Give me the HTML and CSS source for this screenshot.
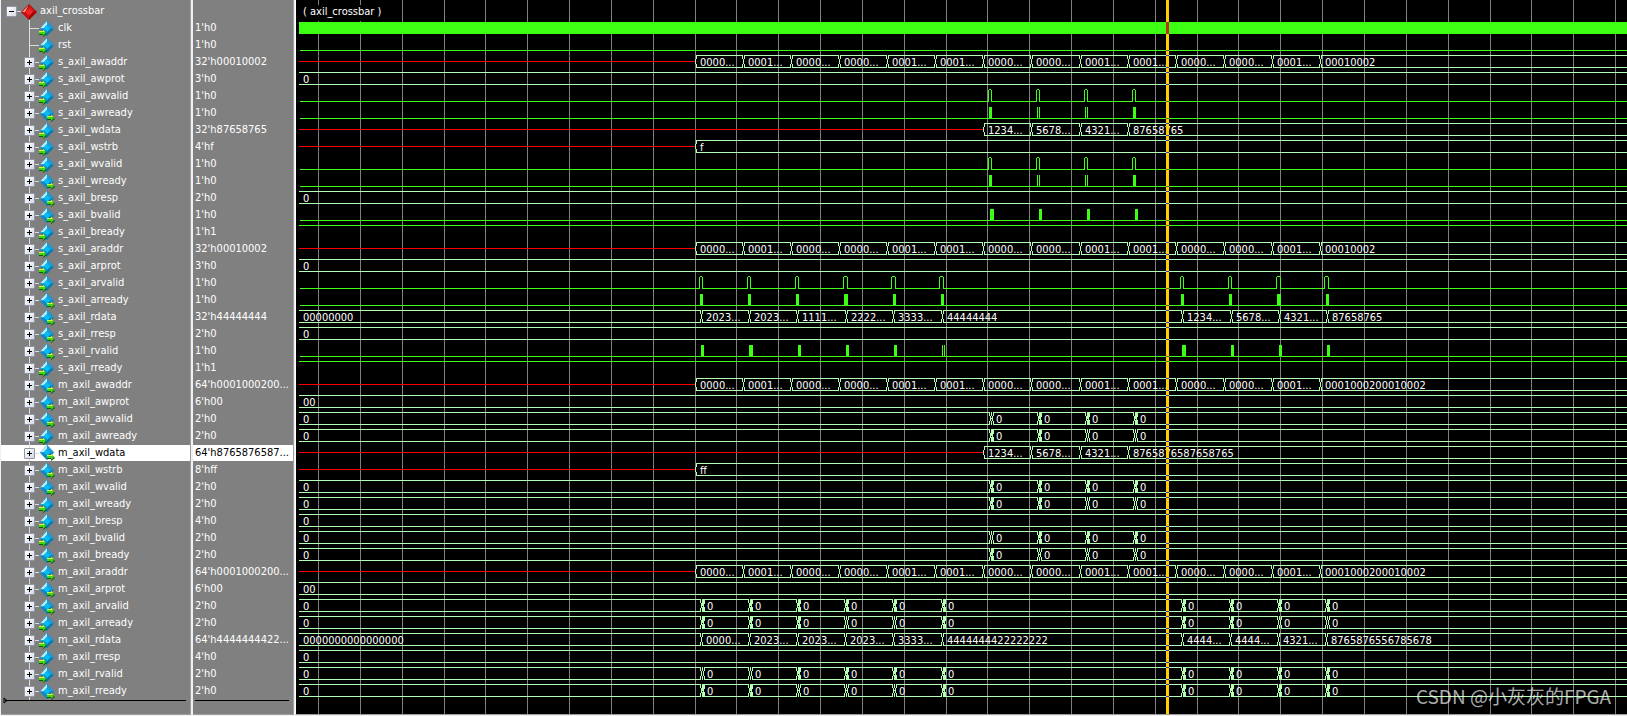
FILE: index.html
```
<!DOCTYPE html>
<html lang="en">
<head>
<meta charset="utf-8">
<title>axil_crossbar waveform</title>
<link rel="stylesheet" href="styles.css">
</head>
<body>
<svg class="defs" aria-hidden="true">
  <defs>
    <symbol id="scope" viewBox="0 0 16 16">
      <path d="M8 0 16 8 8 16 0 8Z" fill="#a80000"/>
      <path d="M8 1 4 8H1Z" fill="#ff9c90"/>
      <path d="M8 1 14 7 11 8 8 5Z" fill="#d41a1a"/>
      <path d="M8 4 12 8 8 12 4 8Z" fill="#ef2424"/>
      <path d="M1 8H4L8 12V15Z" fill="#d01010"/>
    </symbol>
    <symbol id="diamond" viewBox="0 0 16 16">
      <path d="M8 0 15 7.500 8 15 1 7.500Z" fill="#0878b0"/>
      <path d="M8 0 8 4 4.500 7.500H1Z" fill="#b4ecfa"/>
      <path d="M8 0 15 7.500H11.500L8 4Z" fill="#1a9edb"/>
      <path d="M8 4 11.500 7.500 8 11 4.500 7.500Z" fill="#05bdf5"/>
      <path d="M1 7.500H4.500L8 11V15Z" fill="#1189c8"/>
    </symbol>
    <symbol id="arrow" viewBox="0 0 8 8">
      <path d="M0 3H4V1L8 5 4 8V6H0Z" fill="#075c09"/>
      <path d="M0 2H4V0L7 4 4 7V5H0Z" fill="#45d414"/>
      <path d="M0 2H4V1L6 3H0Z" fill="#dcf63c"/>
    </symbol>
  </defs>
</svg>
<main class="viewer">
  <section class="pane names" aria-label="Signals">
    <ul class="list" id="names"></ul>
    <div class="end"><svg class="tip" viewBox="0 0 5 7"><path d="M1 1V6L4 3.500Z" fill="none" stroke="#000"/></svg></div>
  </section>
  <section class="pane values" aria-label="Values">
    <ul class="list" id="values"></ul>
    <div class="end"></div>
  </section>
  <section class="waves" aria-label="Waveforms">
    <svg id="canvas" class="canvas"></svg>
    <div class="watermark">CSDN @小灰灰的FPGA</div>
  </section>
</main>
<script src="waves.js"></script>
</body>
</html>
```
FILE: styles.css
```
* {
  box-sizing: border-box;
}

body {
  margin: 0;
  background: #f0f0f0;
  font-family: "DejaVu Sans Condensed", "DejaVu Sans", sans-serif;
  font-size: 11px;
  line-height: 17px;
}

.defs {
  position: absolute;
  width: 0;
  height: 0;
}

.viewer {
  display: flex;
  min-height: 100vh;
  padding: 0 0 1px 1px;
}

.pane {
  flex: none;
  background: #808080;
  border-right: 1px solid #a0a0a0;
  border-bottom: 1px solid #a0a0a0;
  color: #fff;
  overflow: hidden;
}

.names {
  width: 190px;
  margin-right: 2px;
}

.values {
  width: 101px;
  margin-right: 1px;
}

.list {
  margin: 0;
  padding: 3px 0 0;
  list-style: none;
}

.row {
  display: flex;
  align-items: center;
  height: 17px;
  white-space: pre;
}

.label {
  padding-bottom: 2px;
}

.selected {
  background: #fff;
  background-clip: content-box;
  padding-bottom: 1px;
  color: #000;
}

.selected .label {
  padding-bottom: 1px;
}

.root {
  padding-left: 5px;
}

.values .row {
  padding-left: 2px;
}

.values .selected {
  padding-left: 0;
  text-indent: 2px;
}

.branch {
  display: flex;
  align-items: center;
  align-self: stretch;
  width: 20px;
  margin-left: 18px;
  padding-left: 5px;
  background:
    linear-gradient(#dcdcdc, #dcdcdc) 10px 0 / 1px 100% no-repeat,
    linear-gradient(#dcdcdc, #dcdcdc) 10px 8px / 10px 1px no-repeat;
}

.expander {
  width: 11px;
  height: 11px;
  padding: 0;
  border: 1px solid #9098a8;
  border-radius: 1px;
  background:
    linear-gradient(#000, #000) center / 5px 1px no-repeat,
    linear-gradient(135deg, #fff, #d4d8e4);
}

.plus {
  background:
    linear-gradient(#000, #000) center / 5px 1px no-repeat,
    linear-gradient(#000, #000) center / 1px 5px no-repeat,
    linear-gradient(135deg, #fff, #d4d8e4);
}

.stem {
  width: 4px;
  height: 1px;
  background: #dcdcdc;
}

.icon {
  flex: none;
  width: 16px;
  height: 16px;
  margin-right: 3px;
  overflow: visible;
}

.end {
  height: 1px;
  margin: 0 4px 0 2px;
  background: #000;
}

.names .end {
  position: relative;
  margin-left: 4px;
}

.tip {
  position: absolute;
  left: -2px;
  top: -3px;
  width: 5px;
  height: 7px;
}

.waves {
  position: relative;
  flex: 1;
  min-width: 0;
  background: #000;
  border-left: 1px solid #fff;
  border-bottom: 1px solid #a0a0a0;
  overflow: hidden;
}

.canvas {
  display: block;
  width: 100%;
  height: 100%;
  shape-rendering: crispEdges;
}

.canvas text {
  fill: #fff;
}

.gridline {
  fill: #808080;
}

.block {
  fill: #3cff14;
}

.solid {
  fill: #b4ffb4;
}

.unknown {
  fill: #f00;
}

.mask {
  fill: #000;
}

.cursor {
  fill: #ffd000;
}

.cross-bus {
  fill: #4b2fb4;
}

.cross-bit {
  fill: #c32f14;
}

.watermark {
  position: absolute;
  right: 16px;
  bottom: 6px;
  color: rgba(255, 255, 255, 0.68);
  font: 19px/24px "Noto Sans CJK SC", sans-serif;
}
```
FILE: waves.js
```
const ORIGIN = 296;
const ROW = 17;
const TOP = 3;
const CURSOR = 1166;
const END = 4000;

const aw = ["0000...", "0001...", "0000...", "0000...", "0001...", "0001...", "0000...", "0000...", "0001...", "0001...", "0000...", "0000...", "0001..."];
const steps = [695, 743, 791, 839, 887, 935, 983, 1031, 1080, 1128, 1176, 1224, 1272, 1320];
const address = last => ({ kind: "bus", items: steps.map((x, i) => [x, i < 13 ? aw[i] : last]) });
const data = last => ({ kind: "bus", items: [[983, "1234..."], [1031, "5678..."], [1080, "4321..."], [1128, last]] });
const constant = text => ({ kind: "bus", start: text, items: [] });
const glitch = (xs, types) => ({ kind: "glitch", xs, types });
const bit = (shape, list) => ({ kind: "bit", shape, list });
const low = { kind: "bit", list: [] };
const high = { kind: "high" };

const writes = [988, 1036, 1084, 1132];
const gw = [989, 1037, 1085, 1133];
const reads = [[699, 4], [747, 4], [795, 4], [843, 5], [891, 5], [939, 5], [1180, 4], [1228, 4], [1276, 5], [1324, 5]];
const gr = [700, 748, 796, 844, 892, 941, 1181, 1229, 1277, 1325];
const valid = bit("open", writes.map(x => [x, 4]));
const ready = bit("fill", [[989, 3], [1037, -3], [1085, -3], [1133, 3]]);

// name, value, port direction, wave
const signals = [
  ["clk", "1'h0", "in", { kind: "clock" }],
  ["rst", "1'h0", "in", low],
  ["s_axil_awaddr", "32'h00010002", "in", address("00010002")],
  ["s_axil_awprot", "3'h0", "in", constant("0")],
  ["s_axil_awvalid", "1'h0", "in", valid],
  ["s_axil_awready", "1'h0", "out", ready],
  ["s_axil_wdata", "32'h87658765", "in", data("87658765")],
  ["s_axil_wstrb", "4'hf", "in", { kind: "bus", items: [[695, "f"]] }],
  ["s_axil_wvalid", "1'h0", "in", valid],
  ["s_axil_wready", "1'h0", "out", ready],
  ["s_axil_bresp", "2'h0", "out", constant("0")],
  ["s_axil_bvalid", "1'h0", "out", bit("fill", [[990, 4], [1039, 3], [1087, 3], [1135, 3]])],
  ["s_axil_bready", "1'h1", "in", high],
  ["s_axil_araddr", "32'h00010002", "in", address("00010002")],
  ["s_axil_arprot", "3'h0", "in", constant("0")],
  ["s_axil_arvalid", "1'h0", "in", bit("open", reads)],
  ["s_axil_arready", "1'h0", "out", bit("fill", [[700, 3], [748, 3], [796, 3], [844, 4], [893, 3], [941, 3], [1181, 3], [1229, 3], [1277, 4], [1326, 3]])],
  ["s_axil_rdata", "32'h44444444", "out", { kind: "bus", start: "00000000", items: [[701, "2023..."], [749, "2023..."], [797, "1111..."], [846, "2222..."], [893, "3333..."], [942, "44444444"], [1182, "1234..."], [1231, "5678..."], [1279, "4321..."], [1327, "87658765"]] }],
  ["s_axil_rresp", "2'h0", "out", constant("0")],
  ["s_axil_rvalid", "1'h0", "out", bit("fill", [[701, 3], [749, 4], [798, 3], [846, 3], [894, 3], [942, -3], [1182, 4], [1231, 3], [1279, 3], [1327, 3]])],
  ["s_axil_rready", "1'h1", "in", high],
  ["m_axil_awaddr", "64'h0001000200...", "out", address("0001000200010002")],
  ["m_axil_awprot", "6'h00", "out", constant("00")],
  ["m_axil_awvalid", "2'h0", "out", glitch(gw, "mfff")],
  ["m_axil_awready", "2'h0", "in", glitch(gw, "ffoo")],
  ["m_axil_wdata", "64'h8765876587...", "out", data("8765876587658765")],
  ["m_axil_wstrb", "8'hff", "out", { kind: "bus", items: [[695, "ff"]] }],
  ["m_axil_wvalid", "2'h0", "out", glitch(gw, "ffff")],
  ["m_axil_wready", "2'h0", "in", glitch(gw, "ffoo")],
  ["m_axil_bresp", "4'h0", "in", constant("0")],
  ["m_axil_bvalid", "2'h0", "in", glitch(gw, "offf")],
  ["m_axil_bready", "2'h0", "out", glitch(gw, "fmmm")],
  ["m_axil_araddr", "64'h0001000200...", "out", address("0001000200010002")],
  ["m_axil_arprot", "6'h00", "out", constant("00")],
  ["m_axil_arvalid", "2'h0", "out", glitch(gr, "ffffffffff")],
  ["m_axil_arready", "2'h0", "in", glitch(gr, "fffoofffoo")],
  ["m_axil_rdata", "64'h4444444422...", "in", { kind: "bus", start: "0000000000000000", items: [[701, "0000..."], [749, "2023..."], [797, "2023..."], [845, "2023..."], [893, "3333..."], [942, "4444444422222222"], [1182, "4444..."], [1230, "4444..."], [1278, "4321..."], [1326, "8765876556785678"]] }],
  ["m_axil_rresp", "4'h0", "in", constant("0")],
  ["m_axil_rvalid", "2'h0", "in", glitch(gr, "ooffffffff")],
  ["m_axil_rready", "2'h0", "out", glitch(gr, "ffmmmfffff")]
];

const SELECTED = "m_axil_wdata";
const rows = [];
const vals = ['<li class="row"></li>'];
rows.push('<li class="row root"><button class="expander" aria-label="Collapse axil_crossbar"></button><span class="stem"></span><svg class="icon"><use href="#scope"/></svg><span class="label">axil_crossbar</span></li>');
signals.forEach(([name, value, dir], i) => {
  const cls = name === SELECTED ? "row selected" : "row";
  const button = i < 2 ? "" : `<button class="expander plus" aria-label="Expand ${name}"></button>`;
  const x = dir === "in" ? 0 : 8;
  rows.push(`<li class="${cls}"><span class="branch">${button}</span><svg class="icon"><use href="#diamond" width="16" height="16"/><use href="#arrow" x="${x}" y="8" width="8" height="8"/></svg><span class="label">${name}</span></li>`);
  vals.push(`<li class="${cls}"><span class="label">${value}</span></li>`);
});
document.getElementById("names").innerHTML = rows.join("");
document.getElementById("values").innerHTML = vals.join("");

const out = [];
const box = (cls, x, y, w, h) => out.push(`<rect class="${cls}" x="${x - ORIGIN}" y="${y}" width="${w}" height="${h}"/>`);
const text = (x, y, s) => out.push(`<text x="${x - ORIGIN}" y="${y + 12}">${s}</text>`);
const hline = (cls, x1, x2, y) => box(cls, x1, y, x2 - x1, 1);

for (let k = 0; k < 90; k++) box("gridline", Math.round(318 + 41.84 * k), 0, 1, 2000);
box("mask", 303, 5, 78, 16);
text(303, 3, "( axil_crossbar )");

// Sloped edge of a bus value: side -1 closes the value on the left, +1 opens the next
function edge(x, y, side) {
  box("solid", x + side, y + 1, 1, 4);
  box("solid", x, y + 5, 1, 5);
  box("solid", x + side, y + 10, 1, 4);
}

function busLines(x1, x2, y) {
  hline("solid", x1, x2, y + 1);
  hline("solid", x1, x2, y + 13);
}

const crossings = [];
signals.forEach(([, , , wave], i) => {
  const y = TOP + ROW * (i + 1);
  if (wave.kind === "clock") {
    box("block", 299, y + 2, END, 12);
    crossings.push(["cross-bit", y + 2, 12]);
  } else if (wave.kind === "high") {
    hline("block", 299, END, y + 1);
    crossings.push(["cross-bit", y + 1, 1]);
  } else if (wave.kind === "bit") {
    hline("block", 300, END, y + 13);
    crossings.push(["cross-bit", y + 13, 1]);
    wave.list.forEach(([x, w]) => {
      if (wave.shape === "open") {
        box("mask", x + 1, y + 13, w - 2, 1);
        box("block", x, y + 2, 1, 12);
        box("block", x + w - 1, y + 2, 1, 12);
        box("block", x + 1, y + 1, w - 2, 1);
      } else if (w > 0) {
        box("block", x, y + 2, w, 12);
      } else {
        box("block", x, y + 2, 1, 12);
        box("block", x - w - 1, y + 2, 1, 12);
      }
    });
  } else if (wave.kind === "bus") {
    let from = 299;
    if (wave.start) text(303, y, wave.start);
    wave.items.forEach(([x, s], n) => {
      if (n === 0 && !wave.start) {
        box("unknown", 299, y + 7, x - 299, 1);
      } else {
        busLines(from, x, y);
        edge(x, y, -1);
      }
      edge(x, y, 1);
      from = x + 1;
      text(x + 5, y, s);
    });
    busLines(from, END, y);
    crossings.push(["cross-bus", y + 1, 1], ["cross-bus", y + 13, 1]);
  } else {
    let from = 299;
    text(303, y, "0");
    wave.xs.forEach((x, n) => {
      const type = wave.types[n];
      busLines(from, x, y);
      edge(x + 1, y, -1);
      if (type === "f") {
        box("solid", x + 2, y + 1, 3, 5);
        box("solid", x + 1, y + 6, 3, 2);
        box("solid", x + 2, y + 9, 3, 5);
      } else if (type === "m") {
        edge(x + 1, y, 1);
        box("solid", x + 1, y + 7, 3, 1);
      } else {
        box("solid", x + 2, y + 1, 1, 4);
        box("solid", x + 2, y + 10, 1, 4);
      }
      edge(x + 3, y, 1);
      from = x + 4;
      text(x + 7, y, "0");
    });
    busLines(from, END, y);
    crossings.push(["cross-bus", y + 1, 1], ["cross-bus", y + 13, 1]);
  }
});

box("cursor", CURSOR, 0, 3, 2000);
crossings.forEach(([cls, y, h]) => box(cls, CURSOR, y, 3, h));
document.getElementById("canvas").innerHTML = out.join("");
```
